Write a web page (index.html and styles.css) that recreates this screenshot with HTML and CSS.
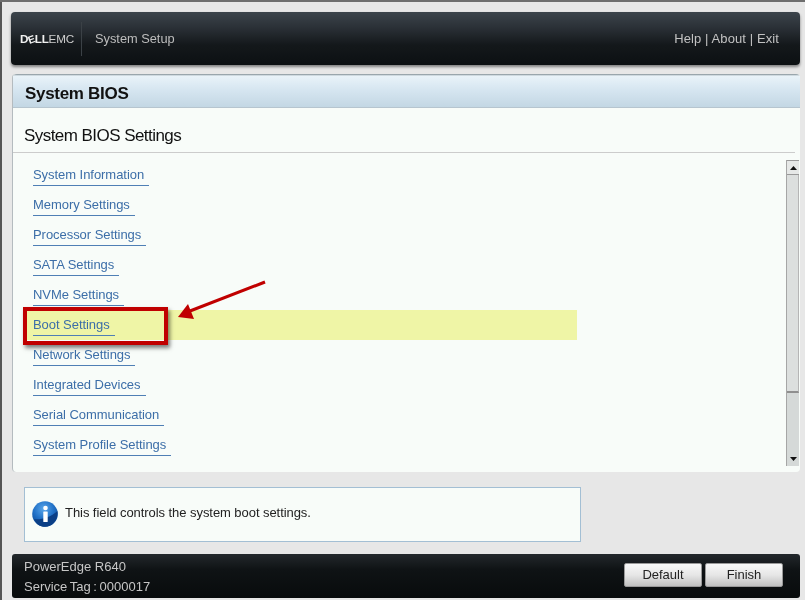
FILE: index.html
```html
<!DOCTYPE html>
<html lang="en">
<head>
<meta charset="utf-8">
<title>System Setup</title>
<link rel="stylesheet" href="styles.css">
</head>
<body>
<div class="page">
  <header class="topbar">
    <div class="brand"><span class="logo"><b>D<i>E</i>LL</b>EMC</span><span class="appname">System Setup</span></div>
    <nav class="toplinks">Help | About | Exit</nav>
  </header>
  <main class="panel">
    <h1 class="panel-title">System BIOS</h1>
    <h2 class="section-title">System BIOS Settings</h2>
    <div class="content">
      <ul class="menu">
        <li class="row"><a>System Information</a></li>
        <li class="row"><a>Memory Settings</a></li>
        <li class="row"><a>Processor Settings</a></li>
        <li class="row"><a>SATA Settings</a></li>
        <li class="row"><a>NVMe Settings</a></li>
        <li class="row active"><a>Boot Settings</a></li>
        <li class="row"><a>Network Settings</a></li>
        <li class="row"><a>Integrated Devices</a></li>
        <li class="row"><a>Serial Communication</a></li>
        <li class="row"><a>System Profile Settings</a></li>
      </ul>
      <div class="scrollbar">
        <span class="sb-btn"><svg width="7" height="4" viewBox="0 0 7 4"><path d="M3.5 0L7 4H0z" fill="#111"/></svg></span>
        <span class="sb-thumb"></span>
        <span class="sb-track"></span>
        <span class="sb-end"><svg width="7" height="4" viewBox="0 0 7 4"><path d="M0 0H7L3.500 4z" fill="#111"/></svg></span>
      </div>
    </div>
  </main>
  <section class="help">
    <svg class="info" width="26" height="26" viewBox="0 0 26 26">
      <defs>
        <radialGradient id="ig" cx="0.450" cy="0.300" r="0.700">
          <stop offset="0" stop-color="#5aa6ea"/><stop offset="0.550" stop-color="#2272c8"/><stop offset="1" stop-color="#0c4a96"/>
        </radialGradient>
      </defs>
      <circle cx="13" cy="13" r="12.800" fill="url(#ig)"/>
      <path d="M2 18C8 19 18 17 25.500 10 26.500 19 20 25.800 13 25.800 8 25.800 4 23 2 18z" fill="#0b3f86"/>
      <circle cx="13.500" cy="7" r="2.300" fill="#fff"/>
      <rect x="11.300" y="10.500" width="4.400" height="10.500" rx="0.500" fill="#fff"/>
    </svg>
    <p class="help-text">This field controls the system boot settings.</p>
  </section>
  <footer class="bottombar">
    <div class="sysinfo"><div>PowerEdge R640</div><div class="tag">Service Tag : 0000017</div></div>
    <div class="actions"><button class="btn">Default</button><button class="btn">Finish</button></div>
  </footer>
  <div class="callout"></div>
  <svg class="arrow" width="92" height="42" viewBox="0 0 92 42">
    <path d="M89 3L14 32" stroke="#c00000" stroke-width="3" fill="none"/>
    <path d="M2 38L12 25 18 40z" fill="#c00000"/>
  </svg>
</div>
</body>
</html>
```
FILE: styles.css
```css
* { box-sizing: border-box; }
html, body { margin: 0; padding: 0; }
body { width: 805px; height: 600px; overflow: hidden; background: #e7e7e7; font-family: "Liberation Sans", Arial, sans-serif; }
.page { position: relative; width: 805px; height: 600px; display: flex; flex-direction: column; padding: 10px 5px 0 12px; border-top: 2px solid #6e6e6e; background: #e7e7e7; filter: blur(0.35px); }
.page::before { content: ""; position: absolute; left: 0; top: 0; bottom: 0; width: 2px; background: #555; }
.topbar { height: 53px; flex: none; margin-left: -1px; display: flex; align-items: center; justify-content: space-between; padding: 0 21px 0 9px; border-radius: 4px; background: linear-gradient(#3c444b 0%, #2a3036 30%, #14181b 62%, #0c1012 100%); box-shadow: 0 2px 3px rgba(0,0,0,.45); color: #c9c9c9; }
.brand { display: flex; align-items: center; }
.logo { width: 62px; font-size: 11.700px; letter-spacing: -0.200px; color: #cfcfcf; height: 34px; line-height: 34px; border-right: 1px solid #3b4146; }
.logo b { font-weight: 700; color: #f0f0f0; letter-spacing: -0.300px; }
.logo i { display: inline-block; font-size: 10.500px; font-style: normal; transform: rotate(-20deg); }
.appname { padding-left: 13px; font-size: 12.800px; color: #bdbdbd; }
.toplinks { font-size: 13px; color: #c2c2c2; letter-spacing: 0.100px; }
.panel { height: 398px; flex: none; margin-top: 9px; display: flex; flex-direction: column; background: #f8fcf9; border-left: 1px solid #b4bbbf; border-radius: 4px; }
.panel-title { margin: 0; height: 34px; flex: none; padding-left: 12px; font-size: 17px; line-height: 40px; font-weight: 700; color: #111; letter-spacing: -0.300px; background: linear-gradient(#7f8c93 0, #e9f3f9 2px, #d5e5f0 50%, #c3d7e4 100%); border-bottom: 1px solid #b6c5cf; border-radius: 4px 4px 0 0; overflow: hidden; }
.section-title { margin: 0 5px 0 0; height: 45px; flex: none; padding-left: 11px; font-size: 17px; line-height: 55px; font-weight: 400; color: #111; letter-spacing: -0.550px; border-bottom: 1px solid #ccc; }
.content { flex: 1; display: flex; justify-content: space-between; min-height: 0; }
.menu { list-style: none; margin: 7px 0 0; padding: 0; width: 564px; }
.row { height: 30px; margin-left: 10px; padding-left: 10px; }
.row a { display: inline-block; height: 26px; padding: 5px 5px 0 0; font-size: 13px; line-height: 20px; letter-spacing: -0.050px; color: #3c6ea8; border-bottom: 1px solid #4f7fb5; }
.row.active { background: #eff5a6; }
.scrollbar { width: 13px; height: 306px; margin: 7px 1px 0 0; display: flex; flex-direction: column; background: #d5d9d8; border-left: 1px solid #a6a6a6; }
.sb-btn { height: 15px; flex: none; display: flex; align-items: center; justify-content: center; background: #e6e8e7; border-top: 1px solid #999; border-bottom: 1px solid #999; }
.sb-thumb { height: 218px; flex: none; background: #dcdfde; border-bottom: 2px solid #8f8f8f; border-right: 1px solid #b5b5b5; }
.sb-track { flex: 1; }
.sb-end { height: 15px; flex: none; display: flex; align-items: center; justify-content: center; }
.help { width: 557px; height: 55px; flex: none; margin: 15px 0 0 12px; display: flex; align-items: center; padding: 0 0 2px 7px; background: #f8fcf9; border: 1px solid #a3bfd4; }
.info { flex: none; }
.help-text { margin: 0 0 2px 7px; font-size: 13px; color: #222; letter-spacing: -0.060px; }
.bottombar { height: 44px; flex: none; margin-top: 12px; display: flex; justify-content: space-between; align-items: center; padding: 0 17px 2px 12px; border-radius: 3px; background: linear-gradient(#23282c 0, #0f1315 35%, #080b0c 100%); color: #c6c6c6; }
.sysinfo { padding-top: 4px; font-size: 13px; line-height: 20px; }
.tag { word-spacing: -1px; }
.actions { display: flex; gap: 3px; }
.btn { width: 78px; height: 24px; padding: 0 0 2px; font-family: inherit; font-size: 13px; font-weight: 400; color: #222; border: 1px solid #999; border-radius: 2px; background: linear-gradient(#f8f8f8, #e6e6e6 50%, #c0c0c0); }
.callout { position: absolute; left: 23px; top: 305px; width: 145px; height: 38px; border: 4px solid #c00000; box-shadow: 2px 3px 4px rgba(0,0,0,.5); }
.arrow { position: absolute; left: 176px; top: 277px; }
```
